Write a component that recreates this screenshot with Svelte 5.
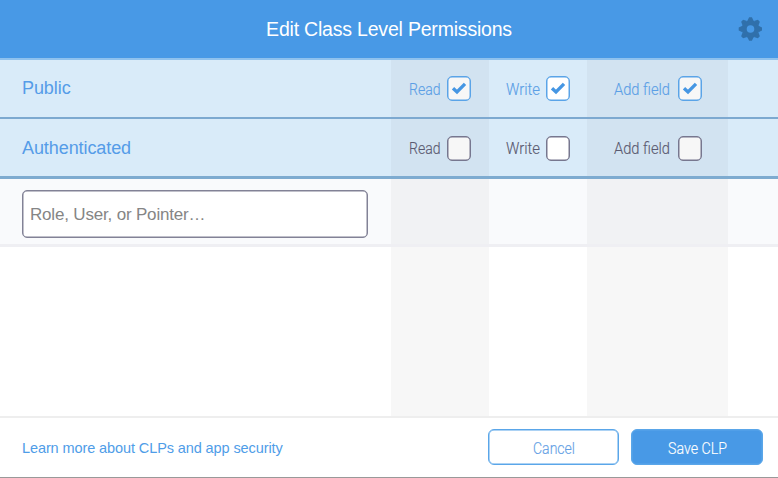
<script>
  let rows = $state([
    { name: 'Public', on: true },
    { name: 'Authenticated', on: false }
  ]);
  const columns = [
    { label: 'Read', width: 31.5, shaded: true },
    { label: 'Write', width: 34, shaded: false },
    { label: 'Add field', width: 56, shaded: true }
  ];
</script>

{#snippet narrow(text, width)}
  <svg class="narrow" {width} height="22" viewBox="0 0 {width} 22">
    <text x="0" y="17" textLength={width} lengthAdjust="spacingAndGlyphs">{text}</text>
  </svg>
{/snippet}

<div class="modal">
  <header>
    <h1>Edit Class Level Permissions</h1>
    <svg class="gear" width="24" height="24" viewBox="-12.5 -12 24 24">
      <circle r="6.3" fill="none" stroke="#3070ab" stroke-width="5" />
      {#each [0, 45, 90, 135, 180, 225, 270, 315] as angle}
        <path transform="rotate({angle})" fill="#3070ab" d="M-3.2-8L-1.4-11.8H1.4L3.2-8Z" />
      {/each}
    </svg>
  </header>

  <main>
    {#each rows as row}
      <div class="row level" class:on={row.on} class:last={!row.on}>
        <div class="name"><span>{row.name}</span></div>
        {#each columns as col}
          <div class="cell" class:shaded={col.shaded}>
            {@render narrow(col.label, col.width)}
            <span class="box" class:gray={col.shaded}>
              {#if row.on}
                <svg width="16" height="13" viewBox="0 0 16 13"><path d="M2 6.2L6 10L14 1.9" fill="none" stroke="#4596e3" stroke-width="3.3" /></svg>
              {/if}
            </span>
          </div>
        {/each}
        <div></div>
      </div>
    {/each}
    <div class="row entry">
      <div class="name"><input placeholder="Role, User, or Pointer…" /></div>
      <div class="shaded"></div><div></div><div class="shaded"></div><div></div>
    </div>
    <div class="row rest">
      <div></div><div class="shaded"></div><div></div><div class="shaded"></div><div></div>
    </div>
  </main>

  <footer>
    <a href="#security">Learn more about CLPs and app security</a>
    <button>{@render narrow('Cancel', 42)}</button>
    <button class="primary">{@render narrow('Save CLP', 59)}</button>
  </footer>
</div>

<style>
  .modal {
    box-sizing: border-box;
    width: 778px;
    height: 478px;
    display: flex;
    flex-direction: column;
    overflow: hidden;
    background: #fff;
    border-bottom: 1px solid #999;
    font-family: "Liberation Sans", Arial, sans-serif;
  }
  header {
    box-sizing: border-box;
    height: 60px;
    flex: none;
    display: grid;
    grid-template-columns: 1fr 24px;
    align-items: center;
    padding: 0 16px 0 40px;
    background: #4899e6;
    border-bottom: 2px solid #8fc2ee;
  }
  h1 {
    margin: 0;
    color: #fff;
    font-size: 19.5px;
    letter-spacing: -0.2px;
    font-weight: 400;
    text-align: center;
    line-height: 24px;
  }
  main { flex: 1; display: flex; flex-direction: column; }
  .row { display: grid; grid-template-columns: 391px 98px 98px 141px 50px; }
  .name { padding-left: 22px; display: flex; align-items: center; }
  .level {
    box-sizing: border-box;
    height: 59px;
    background: #d9ebf9;
    border-bottom: 2px solid #7da9d0;
    color: #5a5a70;
  }
  .level.last { height: 60px; border-bottom-width: 3px; border-color: #7eabd0; }
  .level.on { color: #5b9fe6; }
  .level .name { color: #559ce8; font-size: 18px; letter-spacing: -0.08px; line-height: 22px; }
  .level.on .name { padding-bottom: 2px; }
  .shaded { background: rgba(0, 0, 0, 0.031); }
  .cell { display: flex; align-items: center; justify-content: flex-end; gap: 7px; padding: 1px 18px 0 0; }
  .on .cell { padding-top: 0; }
  .cell:nth-child(3) { padding-right: 17px; gap: 6px; }
  .cell:nth-child(4) { padding-right: 26px; gap: 8px; }
  .box {
    box-sizing: border-box;
    width: 24px;
    height: 25px;
    flex: none;
    display: flex;
    align-items: center;
    justify-content: center;
    border: 1px solid #77778f;
    box-shadow: inset 0 0 0 0.5px #77778f;
    border-radius: 5px;
    background: #fff;
  }
  .on .box { border-color: #5aa4e8; box-shadow: inset 0 0 0 0.5px #5aa4e8; }
  .box.gray { background: #f7f7f7; }
  .narrow { display: block; flex: none; overflow: visible; }
  .narrow text {
    font-family: Roboto, sans-serif;
    font-size: 17px;
    font-weight: 300;
    fill: currentColor;
    stroke: currentColor;
    stroke-width: 0.15px;
  }
  .entry {
    box-sizing: border-box;
    height: 68px;
    background: #f9fafc;
    border-bottom: 3px solid #efeff3;
  }
  .entry .name { padding-top: 5px; }
  input {
    box-sizing: border-box;
    width: 346px;
    height: 48px;
    margin: 0;
    padding: 1px 7px 0;
    border: 1px solid #828296;
    box-shadow: inset 0 0 0 0.5px #828296;
    border-radius: 5px;
    background: #fff;
    font: 17px "Liberation Sans", Arial, sans-serif;
    letter-spacing: -0.18px;
    outline: none;
  }
  input::placeholder { color: #858585; opacity: 1; }
  .rest { flex: 1; }
  footer {
    box-sizing: border-box;
    height: 61px;
    flex: none;
    display: grid;
    grid-template-columns: 1fr 131px 132px;
    gap: 12px;
    align-items: center;
    padding: 0 15px 1px 22px;
    border-top: 2px solid #eee;
  }
  a { padding-top: 2px; color: #4f9de8; font-size: 14.5px; letter-spacing: -0.1px; text-decoration: none; }
  button {
    height: 36px;
    padding: 2px 0 0;
    display: flex;
    align-items: center;
    justify-content: center;
    border: 1px solid #5aa6e9;
    box-shadow: inset 0 0 0 0.5px #5aa6e9;
    border-radius: 6px;
    background: #fff;
    color: #649fe5;
  }
  .primary { background: #4899e6; color: #fff; }
</style>
